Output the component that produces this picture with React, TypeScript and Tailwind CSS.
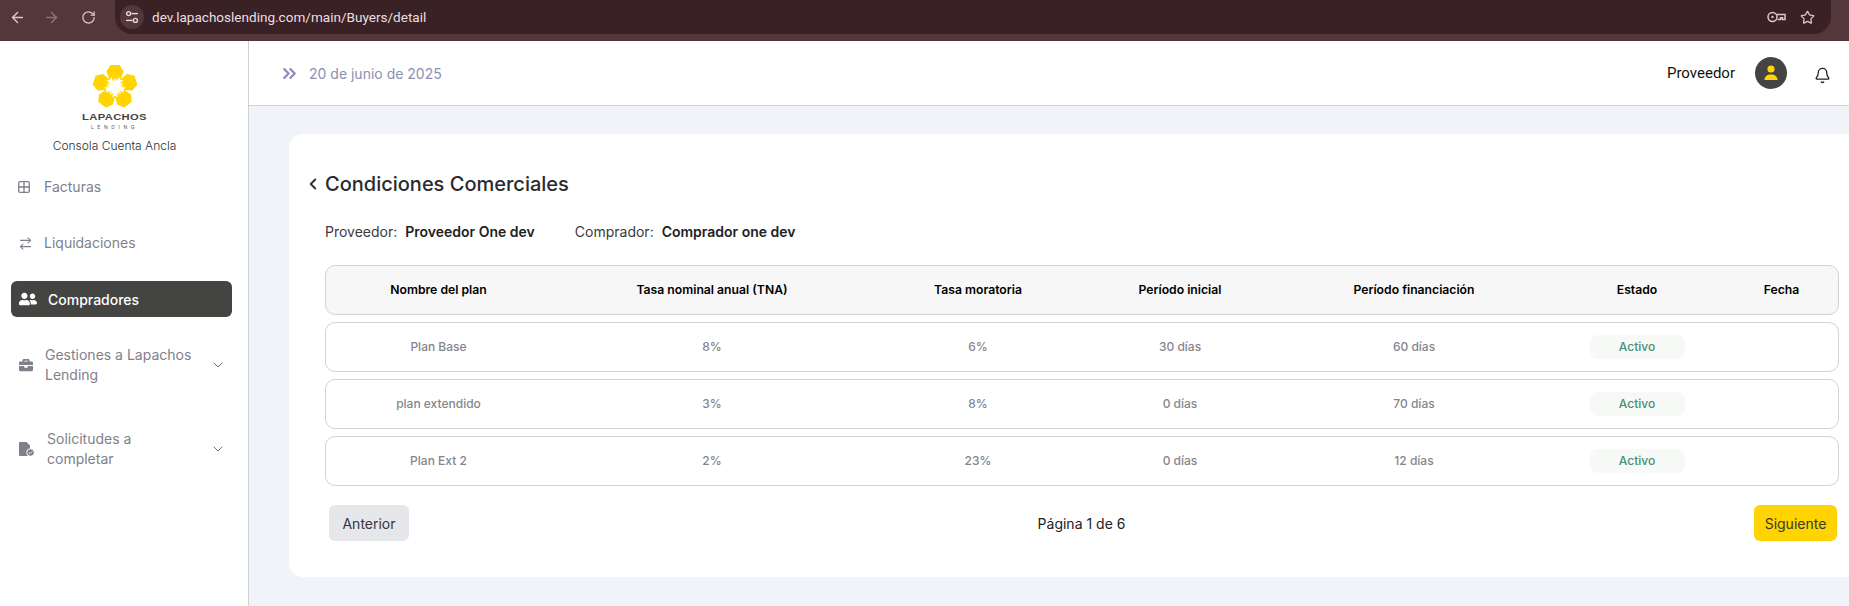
import React from "react";
import { ArrowLeft, ArrowRight, RotateCw, Star, ChevronsRight, ChevronDown, ChevronLeft, Bell, ArrowRightLeft } from "lucide-react";
import { FaUserFriends, FaBriefcase } from "react-icons/fa";

const gridCols = "grid grid-cols-[225px_322px_210px_194px_274px_172px_117px] items-center";

const rows = [
  ["Plan Base", "8%", "6%", "30 días", "60 días"],
  ["plan extendido", "3%", "8%", "0 días", "70 días"],
  ["Plan Ext 2", "2%", "23%", "0 días", "12 días"],
];
const heads = ["Nombre del plan", "Tasa nominal anual (TNA)", "Tasa moratoria", "Período inicial", "Período financiación", "Estado", "Fecha"];

function Logo() {
  const petals = [0, 72, 144, 216, 288];
  return (
    <svg width="46" height="44" viewBox="-23 -23 46 44" aria-hidden="true">
      {petals.map((a) => (
        <path
          key={a}
          transform={`rotate(${a})`}
          d="M-8.6 -15.5 L-4.6 -22 L4.6 -22 L8.6 -15.5 L5.4 -7 L3.6 -10 L2.2 -5.6 L0.9 -9.5 L0 -5 L-0.9 -9.5 L-2.2 -5.6 L-3.6 -10 L-5.4 -7 Z"
          fill="#FFD400"
        />
      ))}
    </svg>
  );
}

function GridIcon() {
  return (
    <svg width="12" height="12" viewBox="0 0 12 12" fill="none" stroke="#7f8088" strokeWidth="1.3" aria-hidden="true">
      <rect x="0.7" y="0.7" width="10.6" height="10.6" rx="1.4" />
      <path d="M6 1V11M1 6H11" />
    </svg>
  );
}

function FileCheck() {
  return (
    <svg width="16" height="15" viewBox="0 0 16 15" aria-hidden="true">
      <path d="M1 0H7.5L11 3.5V14H1A1 1 0 0 1 0 13V1A1 1 0 0 1 1 0Z" fill="#7f8088" />
      <circle cx="11.5" cy="10.5" r="3.8" fill="#7f8088" stroke="#fff" strokeWidth="1" />
      <path d="M9.8 10.5L11 11.7L13.2 9.5" fill="none" stroke="#fff" strokeWidth="0.9" />
    </svg>
  );
}

function TuneIcon() {
  return (
    <svg width="14" height="14" viewBox="0 0 14 14" fill="none" stroke="#e6dadb" strokeWidth="1.4" aria-hidden="true">
      <circle cx="3.6" cy="3.6" r="2" />
      <path d="M6.4 3.6H13" />
      <circle cx="10.4" cy="10.4" r="2" />
      <path d="M1 10.4H7.6" />
    </svg>
  );
}

function KeyIcon() {
  return (
    <svg width="19" height="12" viewBox="0 0 19 12" fill="none" stroke="#d9c9cb" strokeWidth="1.5" aria-hidden="true">
      <circle cx="5.5" cy="6" r="4.5" />
      <circle cx="5.5" cy="6" r="1.2" fill="#d9c9cb" stroke="none" />
      <path d="M10 3.6H18V8.4H15.4V6.8H13.5V8.4H10.6" />
    </svg>
  );
}

function NavItem({ icon, text, cls }: { icon: React.ReactNode; text: string; cls: string }) {
  return (
    <div className={`flex items-center pl-[18px] text-[14px] leading-[20px] text-[#80818c] ${cls}`}>
      <span className="flex w-[26px] shrink-0">{icon}</span>
      <span>{text}</span>
    </div>
  );
}

function NavGroup({ icon, lines, gap, cls }: { icon: React.ReactNode; lines: string[]; gap: string; cls: string }) {
  return (
    <div className={`flex items-center pl-[19px] pr-[22px] text-[14px] leading-[20px] text-[#80818c] ${cls}`}>
      <span className={`flex shrink-0 ${gap}`}>{icon}</span>
      <span className="flex-1">
        {lines.map((l) => (
          <span key={l} className="block">{l}</span>
        ))}
      </span>
      <ChevronDown size={16} strokeWidth={1.5} color="#6f7078" />
    </div>
  );
}

export default function App() {
  return (
    <div className="flex h-[606px] w-[1849px] flex-col overflow-hidden bg-white font-['Inter',sans-serif]">
      {/* Browser bar */}
      <div className="flex h-[41px] shrink-0 items-start bg-[#53373a]">
        <div className="flex h-[34px] w-[115px] items-center pl-[9px] text-[#d9c9cb]">
          <ArrowLeft size={17} strokeWidth={2} />
          <ArrowRight size={17} strokeWidth={2} className="ml-[17px] text-[#8d7476]" />
          <RotateCw size={15} strokeWidth={2} className="ml-[21px]" />
        </div>
        <div className="flex h-[34px] w-[1716px] items-center rounded-b-[17px] bg-[#3a2126] pl-[5px] pr-[16px]">
          <span className="flex h-[24px] w-[24px] items-center justify-center rounded-full bg-[#53373a]">
            <TuneIcon />
          </span>
          <span className="ml-[8px] flex-1 font-['Roboto',sans-serif] text-[13.55px] text-[#eadfe0]">dev.lapachoslending.com/main/Buyers/detail</span>
          <KeyIcon />
          <Star size={15} strokeWidth={2} className="ml-[14px] text-[#d9c9cb]" />
        </div>
      </div>

      <div className="flex min-h-0 flex-1">
        {/* Sidebar */}
        <aside className="flex w-[249px] shrink-0 flex-col border-r border-[#cfd0d3] bg-white">
          <div className="flex flex-col items-center pr-[19px] pt-[23px]">
            <Logo />
            <span className="mt-[4px] font-['Liberation_Sans',sans-serif] text-[9.5px] font-bold leading-[10px] tracking-[0.3px] text-[#444] [transform:scaleX(1.18)]">LAPACHOS</span>
            <span className="mt-[2px] text-[5px] leading-[6px] tracking-[3.6px] text-[#555]">LENDING</span>
            <span className="mt-[7px] text-[12px] font-light leading-[18px] text-[#2e2e38]">Consola Cuenta Ancla</span>
          </div>
          <NavItem icon={<GridIcon />} text="Facturas" cls="mt-[22px] h-[20px]" />
          <NavItem icon={<ArrowRightLeft size={15} strokeWidth={1.7} color="#7f8088" />} text="Liquidaciones" cls="mt-[36px] h-[20px]" />
          <div className="ml-[11px] mr-[16px] mt-[28px] flex h-[36px] items-center rounded-[6px] bg-[#444442] pl-[8px] text-[14px] font-medium text-white">
            <FaUserFriends size={18} color="#fff" className="mr-[11px]" />
            Compradores
          </div>
          <NavGroup icon={<FaBriefcase size={14} color="#7f8088" />} lines={["Gestiones a Lapachos", "Lending"]} gap="w-[26px]" cls="mt-[28px]" />
          <NavGroup icon={<FileCheck />} lines={["Solicitudes a", "completar"]} gap="w-[28px]" cls="mt-[44px]" />
        </aside>

        {/* Main */}
        <div className="flex min-w-0 flex-1 flex-col">
          <header className="flex h-[65px] shrink-0 items-center border-b border-[#cfd0d3] bg-white pl-[30px] pr-[18px]">
            <ChevronsRight size={21} strokeWidth={2.5} color="#8c8fb5" />
            <span className="ml-[9px] flex-1 text-[14px] text-[#8c8fb0]">20 de junio de 2025</span>
            <span className="font-['Roboto',sans-serif] text-[15px] font-normal text-[#111]">Proveedor</span>
            <span className="ml-[20px] flex h-[32px] w-[32px] items-center justify-center rounded-full bg-[#444442]">
              <svg width="16" height="16" viewBox="0 0 16 16" fill="#FFD400" aria-hidden="true">
                <circle cx="8" cy="4" r="3.6" />
                <path d="M1.5 15C1.5 11.5 4 9.5 8 9.5S14.5 11.5 14.5 15Z" />
              </svg>
            </span>
            <Bell size={17} strokeWidth={1.8} color="#222" className="ml-[27px] mt-[5px]" />
          </header>

          <main className="min-h-0 flex-1 bg-[#f0f3f8] pl-[40px] pt-[28px]">
            <section className="h-[443px] rounded-l-[14px] bg-white pl-[36px] pt-[36px]">
              <div className="flex items-center">
                <ChevronLeft size={18} strokeWidth={2.6} color="#333" className="ml-[-21px] mr-[3px]" />
                <h1 className="text-[20px] font-medium leading-[28px] text-[#2a2a2e]">Condiciones Comerciales</h1>
              </div>
              <div className="mt-[24px] flex text-[14px] leading-[20px] text-[#3a3a40]">
                <span>Proveedor:</span>
                <span className="ml-[8px] font-semibold text-[#222]">Proveedor One dev</span>
                <span className="ml-[40px]">Comprador:</span>
                <span className="ml-[8px] font-semibold text-[#222]">Comprador one dev</span>
              </div>

              <div className="mt-[23px] flex w-[1514px] flex-col gap-[7px]">
                <div className={`${gridCols} h-[50px] rounded-[10px] border border-[#d2d2d4] bg-[#f7f7f8] text-center text-[12.2px] font-semibold text-black`}>
                  {heads.map((h) => (
                    <span key={h}>{h}</span>
                  ))}
                </div>
                {rows.map((r) => (
                  <div key={r[0]} className={`${gridCols} h-[50px] rounded-[10px] border border-[#d2d2d4] bg-white text-center text-[12px] font-medium text-[#85858d]`}>
                    {r.map((c, i) => (
                      <span key={i}>{c}</span>
                    ))}
                    <span className="mx-auto flex h-[24px] w-[95px] items-center justify-center rounded-[8px] bg-[#f6f9f6] text-[#4a8f72]">Activo</span>
                    <span />
                  </div>
                ))}
              </div>

              <div className="ml-[4px] mt-[19px] flex w-[1508px] items-center justify-between">
                <button className="h-[36px] w-[80px] rounded-[6px] bg-[#e5e7eb] text-[14px] text-[#36363c]">Anterior</button>
                <span className="text-[14px] text-[#222]">Página 1 de 6</span>
                <button className="h-[36px] w-[83px] rounded-[6px] bg-[#FFD400] text-[14px] text-[#3a3a30]">Siguiente</button>
              </div>
            </section>
          </main>
        </div>
      </div>
    </div>
  );
}
